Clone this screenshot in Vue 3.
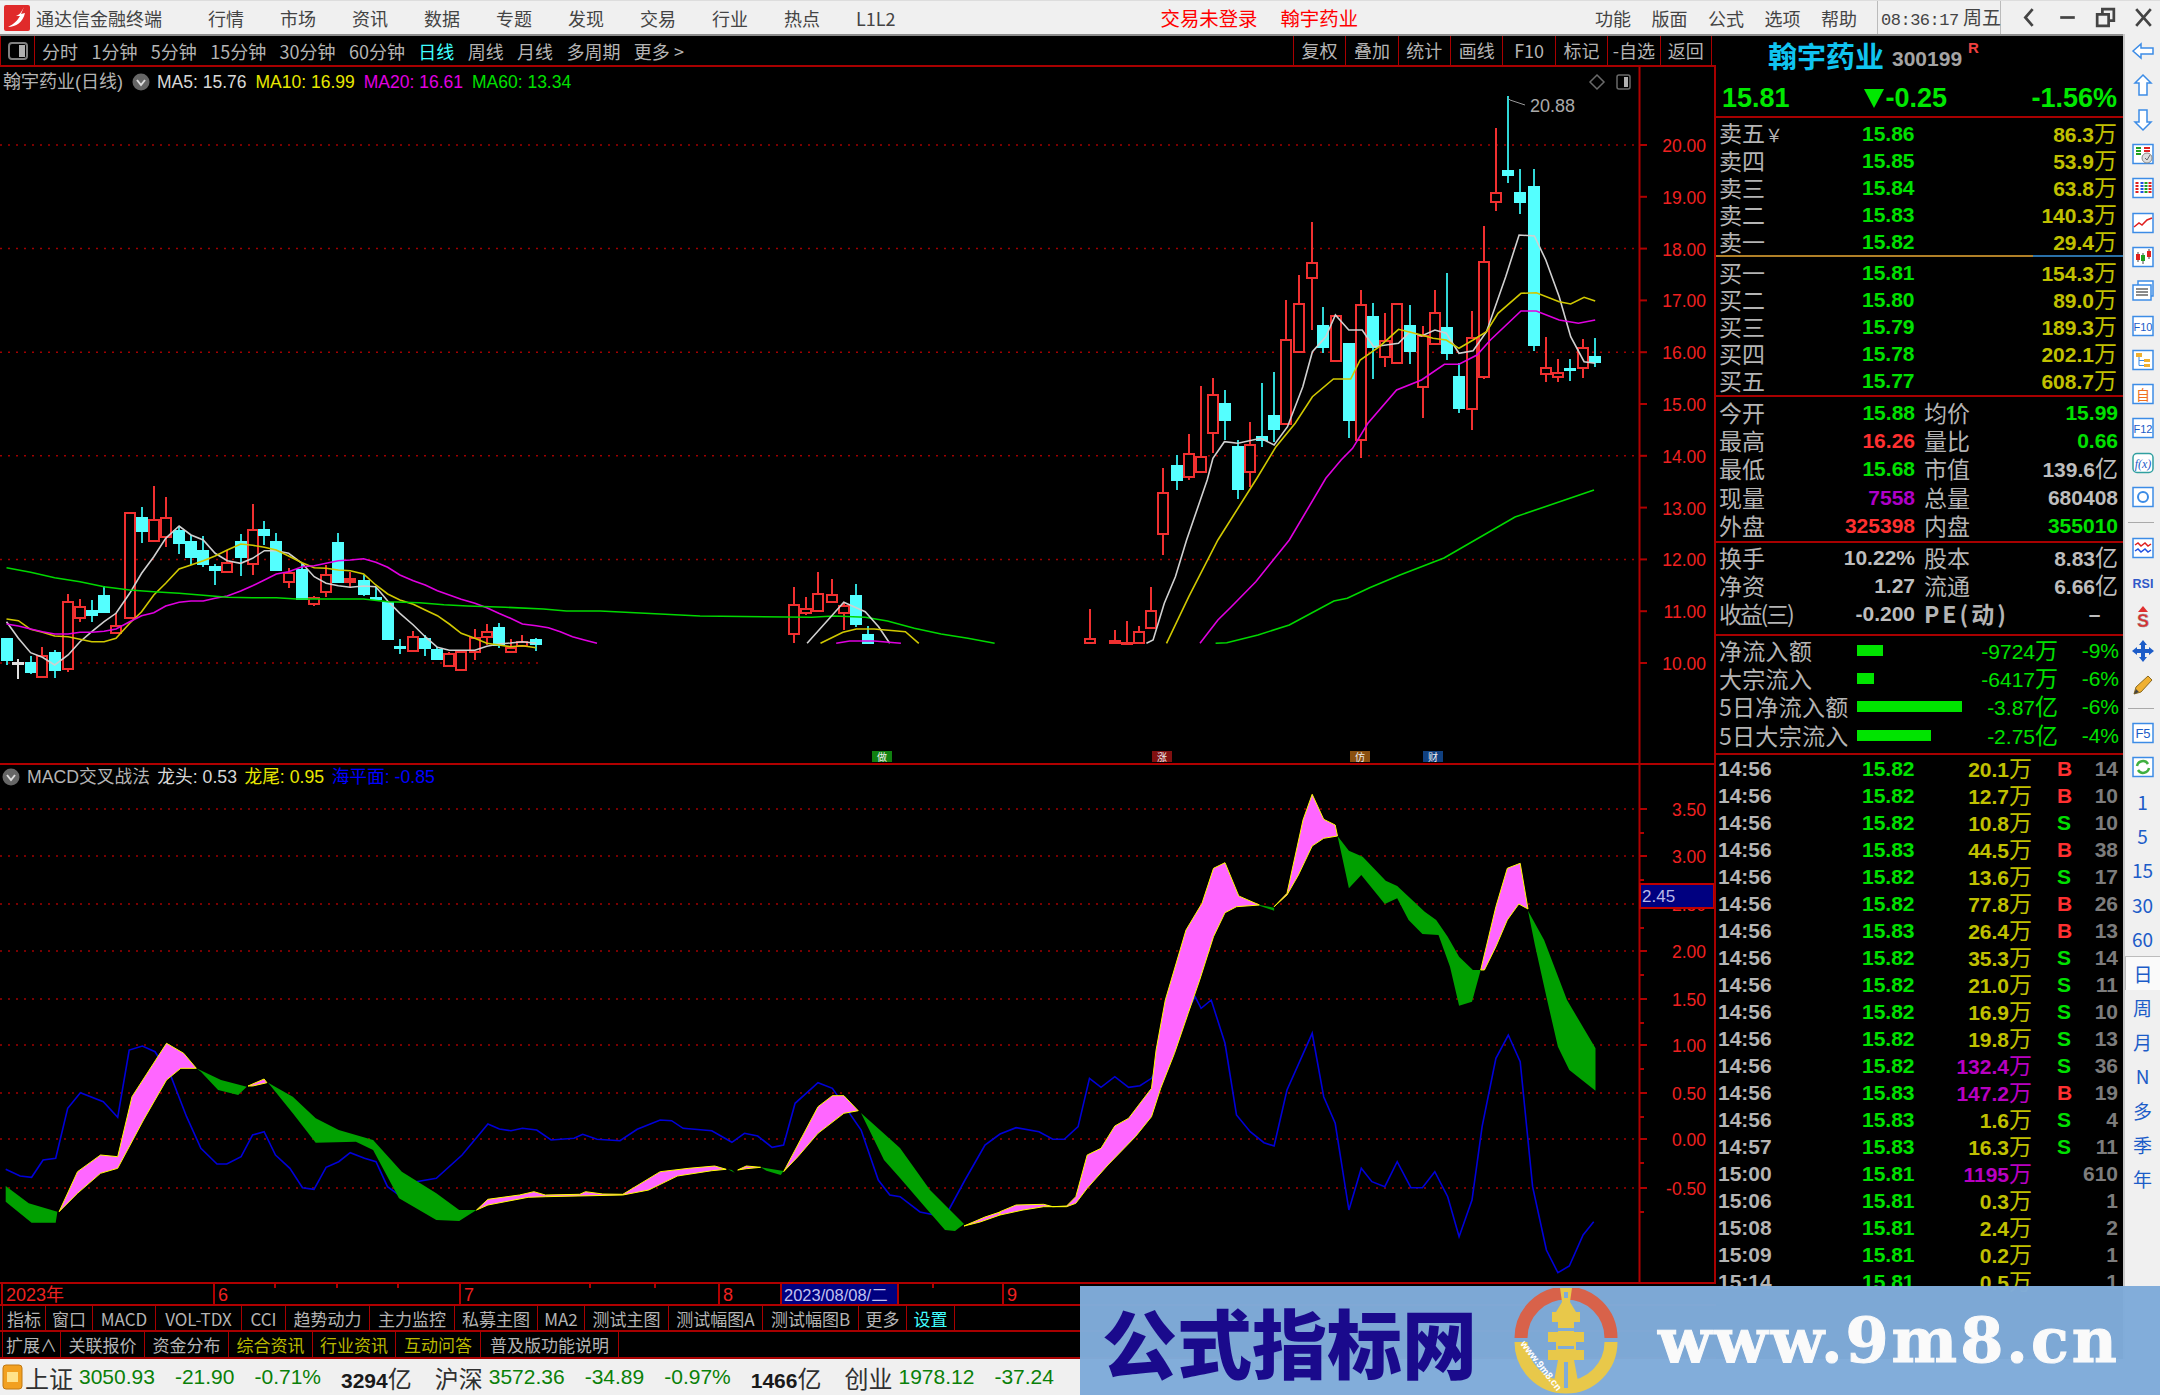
<template>
  <div class="app">
    <header class="titlebar">
      <svg class="logo" viewBox="0 0 26 26">
        <rect width="26" height="26" rx="2" fill="#e02a2a" />
        <path d="M20 2 C17 8 15 10 12 11 L16 11 C13 16 10 19 4 22 C12 22 19 17 21 8 L17 9 Z" fill="#fff" />
      </svg>
      <span class="app-name">通达信金融终端</span>
      <nav class="menu">
        <span v-for="m in mainMenu" :key="m">{{ m }}</span>
      </nav>
      <div class="notice">
        <span>交易未登录</span>
        <span>翰宇药业</span>
      </div>
      <nav class="menu menu-right">
        <span v-for="m in sideMenu" :key="m">{{ m }}</span>
      </nav>
      <div class="clock"><b>08:36:17</b> 周五</div>
      <div class="win-buttons">
        <svg viewBox="0 0 24 24"><path d="M15 4 L8 12 L15 20" /></svg>
        <svg viewBox="0 0 24 24"><path d="M5 12 H19" /></svg>
        <svg viewBox="0 0 24 24"><path d="M4 9 H15 V20 H4 Z M9 9 V4 H20 V15 H15" /></svg>
        <svg viewBox="0 0 24 24"><path d="M5 4 L19 20 M19 4 L5 20" /></svg>
      </div>
    </header>

    <div class="body">
      <main class="left">
        <div class="toolbar">
          <div class="pane-toggle">
            <svg viewBox="0 0 20 18" width="20" height="18">
              <rect x="1" y="1" width="18" height="16" rx="3" fill="none" stroke="#808080" stroke-width="2" />
              <rect x="11" y="3" width="6" height="12" fill="#b0b0b0" />
            </svg>
          </div>
          <span v-for="p in periods" :key="p" class="period" :class="{ active: p === '日线' }">{{ p }}</span>
          <div class="tools">
            <span v-for="t in tools" :key="t">{{ t }}</span>
          </div>
        </div>

        <section class="pane pane-main">
          <svg class="chart" viewBox="0 67 1716 698" width="1716" height="698">
            <line v-for="g in priceGrid" :key="g.y" x1="0" :x2="g.x2" :y1="g.y" :y2="g.y" class="grid" />
            <g v-for="(c, i) in candles" :key="i" :class="'candle-' + c.kind">
              <line :x1="c.x" :x2="c.x" :y1="c.high" :y2="c.low" class="wick" />
              <rect :x="c.x - 5" :y="c.top" width="10" :height="c.height" class="candle-body" />
            </g>
            <polyline v-for="(l, i) in maLines" :key="i" :points="l.points" :stroke="l.color" class="ma" />
            <polyline points="1508,98 1510,100 1525,105" class="flag" />
            <text x="1530" y="112" class="peak">20.88</text>
            <g v-for="m in markers" :key="m.label">
              <rect :x="m.x" y="751" width="20" height="11" :fill="m.color" />
              <text :x="m.x + 10" y="761" class="marker">{{ m.label }}</text>
            </g>
            <line x1="1639.5" x2="1639.5" y1="67" y2="765" class="axis-line" />
            <g v-for="a in priceAxis" :key="a.label">
              <line x1="1640" x2="1647" :y1="a.y" :y2="a.y" class="axis-line" />
              <text x="1706" :y="a.y + 7" class="axis-label">{{ a.label }}</text>
            </g>
            <path d="M1597 75 L1604 82 L1597 89 L1590 82 Z" class="diamond" />
            <rect x="1617" y="75" width="13" height="14" rx="2" class="diamond" />
            <rect x="1624" y="77" width="4" height="10" fill="#b0b0b0" />
          </svg>
          <div class="legend">
            <span class="legend-name">翰宇药业(日线)</span>
            <svg class="chevron" viewBox="0 0 18 18"><circle cx="9" cy="9" r="8.5" fill="#666" /><path d="M5 7 L9 12 L13 7" fill="none" stroke="#ddd" stroke-width="2" /></svg>
            <span class="c-white">MA5: 15.76</span>
            <span class="c-yellow">MA10: 16.99</span>
            <span class="c-magenta">MA20: 16.61</span>
            <span class="c-green">MA60: 13.34</span>
          </div>
        </section>

        <section class="pane pane-sub">
          <svg class="chart" viewBox="0 765 1716 517" width="1716" height="517">
            <line v-for="a in macdAxis" :key="a.y" x1="0" x2="1640" :y1="a.y" :y2="a.y" class="grid" />
            <polyline :points="seaLine" class="sea" />
            <polygon v-for="(p, i) in bandsUp" :key="'u' + i" :points="p" class="band-up" />
            <polygon v-for="(p, i) in bandsDown" :key="'d' + i" :points="p" class="band-down" />
            <line x1="1639.5" x2="1639.5" y1="765" y2="1282" class="axis-line" />
            <g v-for="a in macdAxis" :key="a.label">
              <line x1="1640" x2="1647" :y1="a.y" :y2="a.y" class="axis-line" />
              <line x1="1640" x2="1644" :y1="a.y + 24" :y2="a.y + 24" class="axis-line" />
              <text x="1706" :y="a.y + 7" class="axis-label">{{ a.label }}</text>
            </g>
            <rect x="1640" y="884" width="74" height="24" class="price-tag" />
            <text x="1642" y="902" class="price-tag-text">2.45</text>
          </svg>
          <div class="legend legend-sub">
            <svg class="chevron" viewBox="0 0 18 18"><circle cx="9" cy="9" r="8.5" fill="#666" /><path d="M5 7 L9 12 L13 7" fill="none" stroke="#ddd" stroke-width="2" /></svg>
            <span class="legend-name">MACD交叉战法</span>
            <span class="c-white">龙头: 0.53</span>
            <span class="c-yellow">龙尾: 0.95</span>
            <span class="c-blue">海平面: -0.85</span>
          </div>
        </section>

        <svg class="date-axis" viewBox="0 1282 1716 24" width="1716" height="24">
          <rect x="781" y="1284" width="117" height="21" fill="#000080" />
          <line x1="0" x2="1716" y1="1283" y2="1283" class="axis-line" />
          <line x1="0" x2="1716" y1="1305" y2="1305" class="axis-line" />
          <line v-for="d in dateTicks" :key="d" :x1="d" :x2="d" y1="1283" y2="1288" class="axis-line" />
          <g v-for="d in dateMarks" :key="d.x">
            <line :x1="d.x" :x2="d.x" y1="1283" y2="1305" class="axis-line" />
            <text :x="d.x + 4" y="1301" class="date-label">{{ d.label }}</text>
          </g>
          <text x="784" y="1301" class="date-current">2023/08/08/二</text>
        </svg>

        <div class="tabs tabs-first">
          <span v-for="t in tabsFirst" :key="t.label" :class="t.color" :style="{ width: t.width + 'px' }">{{ t.label }}</span>
        </div>
        <div class="tabs tabs-second">
          <span v-for="t in tabsSecond" :key="t.label" :class="t.color" :style="{ width: t.width + 'px' }">{{ t.label }}</span>
        </div>
      </main>

      <aside class="panel">
        <div class="stock-name">
          <strong>翰宇药业</strong>
          <span class="stock-code">300199</span>
          <sup>R</sup>
        </div>
        <div class="quote">
          <span>15.81</span>
          <span class="quote-change"><i></i>-0.25</span>
          <span class="quote-pct">-1.56%</span>
        </div>

        <div class="book">
          <div v-for="r in asks" :key="r.label" class="book-row">
            <span class="lbl">{{ r.label }}<em v-if="r.yen" class="yen">￥</em></span>
            <span class="num c-green">{{ r.price }}</span>
            <span class="num qty">{{ r.qty }}<small>万</small></span>
          </div>
        </div>
        <div class="book-split"></div>
        <div class="book">
          <div v-for="r in bids" :key="r.label" class="book-row">
            <span class="lbl">{{ r.label }}</span>
            <span class="num c-green">{{ r.price }}</span>
            <span class="num qty">{{ r.qty }}<small>万</small></span>
          </div>
        </div>

        <div class="stats stats-first">
          <div v-for="r in statsFirst" :key="r[0]" class="stat-row">
            <span class="lbl stat-first">{{ r[0] }}</span>
            <span class="num stat-val" :class="r[2]">{{ r[1] }}</span>
            <span class="lbl stat-second">{{ r[3] }}</span>
            <span class="num stat-end" :class="r[5]">{{ r[4] }}<small v-if="r[6]">{{ r[6] }}</small></span>
          </div>
        </div>
        <div class="stats stats-second">
          <div v-for="r in statsSecond" :key="r[0]" class="stat-row">
            <span class="lbl stat-first" :class="{ 'lbl-tight': r[0].includes('(') }">{{ r[0] }}</span>
            <span class="num stat-val c-grey">{{ r[1] }}</span>
            <span class="lbl stat-second" :class="{ 'lbl-wide': r[3].startsWith('PE') }">{{ r[3] }}</span>
            <span class="num stat-end c-grey">{{ r[4] }}<small v-if="r[5]">{{ r[5] }}</small></span>
          </div>
        </div>
        <div class="flows">
          <div v-for="f in flows" :key="f.label" class="flow-row">
            <span class="lbl flow-label">{{ f.label }}</span>
            <span class="flow-bar" :style="{ width: f.bar + 'px' }"></span>
            <span class="num flow-val">{{ f.value }}<small>{{ f.unit }}</small></span>
            <span class="num flow-pct">{{ f.pct }}</span>
          </div>
        </div>
        <div class="ticks">
          <div v-for="(t, i) in ticks" :key="i" class="tick-row">
            <span class="num tick-time">{{ t[0] }}</span>
            <span class="num c-green">{{ t[1] }}</span>
            <span class="num tick-qty" :class="{ big: t[5] }">{{ t[2] }}<small>万</small></span>
            <span class="num tick-side" :class="t[3] === 'B' ? 'c-red' : 'c-green'">{{ t[3] }}</span>
            <span class="num tick-count">{{ t[4] }}</span>
          </div>
        </div>
      </aside>

      <aside class="sidebar">
        <template v-for="(s, i) in sideItems" :key="i">
          <div v-if="s === '-'" class="side-sep" :class="{ short: i > 15 }"></div>
          <div v-else-if="s.text" class="side-item side-text" :class="{ selected: s.text === '日' }">{{ s.text }}</div>
          <div v-else class="side-item">
            <svg viewBox="0 0 24 24" width="24" height="24" v-html="s.icon"></svg>
          </div>
        </template>
      </aside>
    </div>

    <footer class="status">
      <svg class="status-icon" viewBox="0 0 21 28">
        <rect x="1" y="2" width="19" height="24" rx="3" fill="#f2a020" stroke="#c07810" />
        <rect x="5" y="9" width="11" height="10" fill="#ffe28a" />
      </svg>
      <div v-for="x in indexes" :key="x.name" class="index">
        <span class="index-name">{{ x.name }}</span>
        <span class="index-num">{{ x.price }}</span>
        <span class="index-num">{{ x.change }}</span>
        <span v-if="x.pct" class="index-num">{{ x.pct }}</span>
        <span v-if="x.amount" class="index-amount"><b>{{ x.amount }}</b><small>亿</small></span>
      </div>
    </footer>

    <div class="banner">
      <span class="banner-title">公式指标网</span>
      <svg class="banner-logo" viewBox="0 0 104 106" width="104" height="106">
        <path d="M7 50 A45 45 0 0 1 97 50" fill="none" stroke="#d8624a" stroke-width="13" />
        <path d="M7 54 A45 45 0 0 0 97 54" fill="none" stroke="#e8c84a" stroke-width="13" />
        <path d="M46 0 H58 L56 14 L62 24 H66 V34 H60 V44 H70 V54 H62 V62 H70 V72 H60 L66 104 H38 L44 72 H34 V62 H42 V54 H34 V44 H44 V34 H38 V24 H42 L48 14 Z" fill="#e8c84a" />
        <path d="M50 4 H54 V10 H50 Z M44 40 H60 V43 H44 Z M44 58 H60 V61 H44 Z M50 74 H54 V100 H50 Z" fill="#7fabd9" />
        <text x="6" y="56" class="banner-logo-text" transform="rotate(52 6 56)">www.9m8.cn</text>
      </svg>
      <span class="banner-url">www.9m8.cn</span>
    </div>
  </div>
</template>

<script setup>
// positions below were read off enlarged crops of the chart, so each list keeps its crop's scale
const crop = (scaleX, originX, originY) => ({
  x: (v) => originX + v / scaleX,
  y: (v) => originY + v / 3
})
const cropLeft = crop(2.613, 0, 470)
const cropMiddle = crop(2.24, 700, 540)
const cropRight = crop(2.613, 1100, 80)
const cropSubLeft = crop(1.742, 0, 760)
const cropSubRight = crop(2.178, 1000, 760)

const toPoints = (list, c) => list.map(([x, y]) => `${c.x(x).toFixed(1)},${c.y(y).toFixed(1)}`).join(' ')
const toCandles = (rows, c) =>
  rows.map(([x, high, top, bottom, low, kind]) => ({
    x: Math.round(c.x(x)),
    high: c.y(high),
    top: c.y(top),
    height: Math.max((bottom - top) / 3, 1),
    low: c.y(low),
    kind
  }))

const mainMenu = ['行情', '市场', '资讯', '数据', '专题', '发现', '交易', '行业', '热点', 'L1L2']
const sideMenu = ['功能', '版面', '公式', '选项', '帮助']
const periods = ['分时', '1分钟', '5分钟', '15分钟', '30分钟', '60分钟', '日线', '周线', '月线', '多周期', '更多 >']
const tools = ['复权', '叠加', '统计', '画线', 'F10', '标记', '-自选', '返回']

const candles = [
  ...toCandles([
    [17, 508, 508, 570, 585, 'c'], [48, 567, 580, 582, 628, 'w'], [80, 558, 580, 607, 612, 'c'],
    [111, 530, 558, 620, 623, 'r'], [143, 540, 548, 601, 625, 'c'], [178, 373, 397, 597, 607, 'r'],
    [209, 386, 410, 443, 455, 'r'], [240, 390, 422, 436, 455, 'c'], [272, 347, 377, 427, 427, 'c'],
    [303, 430, 469, 489, 490, 'r'], [339, 130, 130, 443, 443, 'r'], [370, 111, 143, 183, 220, 'c'],
    [402, 48, 149, 214, 214, 'r'], [433, 80, 144, 200, 232, 'r'], [468, 170, 183, 220, 252, 'c'],
    [499, 195, 215, 260, 285, 'c'], [531, 197, 242, 283, 291, 'c'], [562, 283, 292, 300, 346, 'c'],
    [594, 240, 279, 305, 310, 'r'], [629, 193, 215, 260, 318, 'c'], [660, 102, 180, 282, 314, 'r'],
    [691, 152, 179, 196, 224, 'c'], [722, 188, 215, 300, 300, 'c'], [754, 295, 310, 336, 355, 'r'],
    [789, 283, 301, 388, 388, 'c'], [821, 378, 383, 403, 408, 'r'], [852, 285, 316, 367, 381, 'r'],
    [884, 188, 220, 337, 340, 'c'], [915, 305, 328, 336, 350, 's'], [950, 316, 333, 373, 378, 'c'],
    [982, 350, 384, 387, 393, 'c'], [1013, 395, 400, 507, 507, 'c'], [1045, 508, 530, 534, 553, 'c'],
    [1080, 482, 500, 542, 545, 'r'], [1111, 495, 508, 533, 557, 'c'], [1143, 530, 540, 566, 566, 'c'],
    [1174, 545, 552, 588, 592, 'r'], [1205, 546, 546, 601, 601, 'r'], [1241, 477, 505, 547, 571, 'r'],
    [1272, 463, 487, 502, 525, 'r'], [1303, 458, 473, 525, 535, 'c'], [1334, 508, 533, 547, 548, 'r'],
    [1365, 494, 516, 527, 527, 'r'], [1401, 503, 509, 523, 543, 'c']
  ], cropLeft),
  ...toCandles([
    [211, 140, 195, 283, 310, 'r'], [238, 172, 208, 220, 225, 'r'], [265, 95, 163, 212, 215, 'r'],
    [295, 118, 164, 185, 190, 'r'], [322, 190, 198, 220, 270, 'r'], [349, 131, 167, 252, 262, 'c'],
    [376, 258, 284, 310, 310, 'c'], [873, 208, 298, 310, 310, 'r'], [930, 270, 303, 310, 310, 'r'],
    [957, 244, 309, 310, 310, 'r'], [984, 258, 277, 310, 310, 'r'], [1011, 140, 213, 265, 268, 'r'],
    [1037, -216, -141, -18, 45, 'r']
  ], cropMiddle),
  ...toCandles([
    [200, 1124, 1157, 1200, 1230, 'c'], [232, 1062, 1122, 1190, 1200, 'r'], [263, 918, 1130, 1177, 1177, 'r'],
    [295, 895, 945, 1058, 1120, 'r'], [326, 930, 972, 1020, 1080, 'c'], [361, 1080, 1102, 1227, 1256, 'c'],
    [392, 1025, 1095, 1175, 1220, 'r'], [424, 908, 1070, 1080, 1100, 'c'], [455, 877, 1008, 1047, 1085, 'c'],
    [487, 660, 780, 1033, 1035, 'r'], [521, 585, 672, 816, 816, 'r'], [553, 427, 550, 595, 750, 'r'],
    [584, 680, 738, 800, 818, 'c'], [616, 707, 707, 843, 843, 'r'], [651, 792, 792, 1020, 1075, 'c'],
    [683, 630, 676, 1080, 1135, 'r'], [714, 670, 710, 800, 898, 'c'], [745, 700, 783, 830, 862, 'r'],
    [777, 672, 672, 848, 848, 'r'], [811, 675, 738, 812, 853, 'c'], [843, 738, 768, 920, 1015, 'r'],
    [875, 630, 698, 793, 793, 'r'], [906, 580, 743, 820, 840, 'c'], [938, 850, 890, 983, 998, 'c'],
    [972, 692, 775, 987, 1050, 'r'], [1004, 437, 545, 892, 897, 'r'], [1035, 143, 338, 366, 393, 'r'],
    [1067, 48, 273, 286, 310, 'c'], [1098, 268, 340, 367, 403, 'c'], [1134, 268, 320, 795, 812, 'c'],
    [1165, 770, 865, 883, 907, 'r'], [1196, 836, 878, 892, 907, 'r'], [1228, 836, 868, 871, 903, 'c'],
    [1263, 778, 805, 865, 893, 'r'], [1294, 773, 832, 845, 862, 'c']
  ], cropRight)
]

const maLines = [
  { color: '#d0d0d0', points: toPoints([[17, 455], [48, 505], [80, 548], [111, 562], [143, 585], [178, 555], [209, 515], [240, 485], [272, 455], [303, 430], [339, 370], [370, 310], [402, 260], [433, 205], [468, 168], [499, 195], [531, 210], [562, 250], [594, 272], [629, 280], [660, 265], [691, 242], [722, 242], [754, 250], [789, 280], [821, 320], [852, 340], [884, 347], [915, 352], [950, 348], [982, 350], [1013, 393], [1045, 430], [1080, 465], [1111, 500], [1143, 532], [1174, 541], [1205, 541], [1241, 541], [1272, 529], [1303, 522], [1334, 519], [1365, 515], [1401, 520]], cropLeft) },
  { color: '#d0c800', points: toPoints([[17, 447], [48, 452], [80, 478], [111, 487], [143, 498], [178, 500], [209, 508], [240, 515], [272, 515], [303, 505], [339, 460], [370, 425], [402, 375], [433, 340], [468, 297], [499, 285], [531, 272], [562, 258], [594, 240], [629, 222], [660, 226], [691, 232], [722, 240], [754, 258], [789, 278], [821, 293], [852, 295], [884, 300], [915, 302], [950, 312], [982, 345], [1013, 372], [1045, 390], [1080, 403], [1111, 420], [1143, 437], [1174, 462], [1205, 490], [1241, 505], [1272, 520], [1303, 525], [1334, 530], [1365, 527], [1401, 533]], cropLeft) },
  { color: '#e000e0', points: toPoints([[17, 462], [48, 468], [80, 477], [111, 485], [143, 492], [178, 492], [209, 487], [240, 487], [272, 484], [303, 477], [339, 455], [370, 437], [402, 428], [433, 408], [468, 397], [499, 393], [531, 393], [562, 385], [594, 378], [629, 363], [660, 347], [691, 330], [722, 312], [754, 305], [789, 290], [821, 287], [852, 280], [884, 272], [915, 270], [950, 266], [982, 277], [1013, 292], [1045, 315], [1080, 332], [1111, 345], [1143, 362], [1174, 375], [1205, 388], [1241, 400], [1272, 413], [1303, 430], [1334, 445], [1365, 462], [1401, 467], [1433, 473], [1464, 485], [1496, 500], [1527, 510], [1560, 520]], cropLeft) },
  { color: '#00d800', points: toPoints([[17, 293], [80, 307], [143, 323], [209, 335], [272, 350], [339, 360], [402, 365], [468, 370], [531, 376], [594, 382], [660, 383], [722, 383], [775, 387], [852, 387], [950, 387], [1013, 395], [1096, 398], [1160, 404], [1222, 408], [1320, 412], [1420, 417], [1480, 423], [1568, 423]], cropLeft) + ' ' + toPoints([[0, 228], [250, 232], [300, 228], [370, 232], [420, 243], [480, 265], [540, 282], [600, 295], [660, 310]], cropMiddle) },
  { color: '#00d800', points: toPoints([[1155, 310], [1180, 308], [1250, 285], [1320, 255], [1420, 183], [1450, 175], [1500, 143], [1568, 105]], cropMiddle) + ' 1444,558 1515,517 1594,490' },
  { color: '#d0d0d0', points: toPoints([[240, 310], [290, 235], [322, 187], [370, 215], [400, 260], [425, 310]], cropMiddle) },
  { color: '#d0c800', points: toPoints([[270, 310], [320, 277], [350, 267], [390, 267], [460, 275], [490, 310]], cropMiddle) },
  { color: '#e000e0', points: toPoints([[305, 310], [335, 303], [390, 303], [450, 310]], cropMiddle) },
  { color: '#d0d0d0', points: toPoints([[1000, 310], [1015, 300], [1040, 190], [1065, 110], [1090, 0]], cropMiddle) + ' ' + toPoints([[280, 1200], [295, 1135], [325, 1085], [360, 1090], [420, 1075], [455, 1095], [490, 1040], [530, 920], [555, 815], [590, 770], [615, 705], [650, 750], [685, 750], [715, 800], [780, 790], [810, 755], [840, 768], [875, 750], [905, 760], [938, 820], [975, 812], [1010, 755], [1060, 590], [1095, 465], [1135, 468], [1165, 540], [1200, 650], [1230, 770], [1265, 845], [1294, 850]], cropRight) },
  { color: '#d0c800', points: toPoints([[1045, 310], [1095, 170], [1160, 0]], cropMiddle) + ' ' + toPoints([[410, 1195], [460, 1100], [510, 1030], [555, 950], [610, 897], [655, 897], [680, 840], [730, 800], [780, 748], [840, 765], [870, 775], [905, 780], [938, 805], [975, 780], [1010, 755], [1040, 700], [1100, 640], [1140, 638], [1200, 665], [1230, 672], [1265, 652], [1294, 663]], cropRight) },
  { color: '#e000e0', points: toPoints([[1120, 310], [1160, 240], [1190, 200], [1245, 125], [1320, 0]], cropMiddle) + ' ' + toPoints([[590, 1195], [630, 1140], [660, 1105], [700, 1030], [775, 930], [840, 900], [900, 853], [938, 853], [985, 825], [1020, 780], [1100, 693], [1140, 693], [1200, 720], [1250, 730], [1294, 720]], cropRight) }
]

const priceY = (p) => 145 + (20 - p) * 51.8
const priceAxis = [20, 19, 18, 17, 16, 15, 14, 13, 12, 11, 10].map((p) => ({ y: priceY(p), label: p.toFixed(2) }))
const priceGrid = [20, 18, 16, 14, 12, 10].map((p) => ({ y: priceY(p), x2: p === 10 ? 538 : 1640 }))

const markers = [
  { x: 872, label: '做', color: '#108010' },
  { x: 1152, label: '涨', color: '#801010' },
  { x: 1350, label: '仿', color: '#8a5010' },
  { x: 1423, label: '财', color: '#104080' }
]

const macdAxis = [
  ['3.50', 809], ['3.00', 856], ['2.50', 904], ['2.00', 951], ['1.50', 999],
  ['1.00', 1045], ['0.50', 1093], ['0.00', 1139], ['-0.50', 1188]
].map(([label, y]) => ({ label, y }))

const seaLine = [
  toPoints([[10, 1228], [35, 1248], [55, 1252], [75, 1200], [97, 1195], [118, 1045], [140, 998], [180, 1025], [205, 1072], [225, 870], [248, 858], [270, 875], [298, 950], [325, 1070], [350, 1165], [378, 1212], [395, 1212], [420, 1190], [440, 1125], [460, 1115], [480, 1185], [505, 1225], [527, 1283], [547, 1288], [568, 1222], [590, 1205], [610, 1178], [635, 1195], [655, 1205], [675, 1280], [695, 1305], [725, 1265], [760, 1255], [805, 1185], [850, 1092], [870, 1107], [890, 1112], [910, 1105], [935, 1110], [960, 1140], [1000, 1135], [1015, 1123], [1040, 1138], [1080, 1142], [1110, 1108], [1150, 1080], [1170, 1082], [1190, 1105], [1240, 1112], [1275, 1147], [1297, 1120], [1320, 1128], [1345, 1162], [1365, 1155], [1385, 1030], [1425, 968], [1450, 985], [1500, 1110], [1530, 1260], [1550, 1305], [1568, 1310]], cropSubLeft),
  '920,1212 945,1217 965,1180 985,1145',
  toPoints([[0, 1122], [35, 1103], [85, 1115], [115, 1138], [140, 1138], [170, 1100], [195, 955], [220, 982], [250, 950], [280, 982], [305, 977], [330, 955], [425, 710], [438, 745], [460, 720], [490, 850], [515, 1065], [545, 1115], [575, 1148], [597, 1158], [625, 990], [680, 820], [705, 1010], [730, 1090], [760, 1350], [787, 1225], [810, 1265], [838, 1280], [865, 1205], [895, 1283], [920, 1283], [947, 1235], [975, 1310], [1000, 1430], [1028, 1320], [1050, 1100], [1080, 895], [1107, 825], [1133, 905], [1160, 1280], [1190, 1470], [1215, 1538], [1240, 1518], [1270, 1425], [1293, 1385]], cropSubRight)
].join(' ')

const bandsUp = [
  toPoints([[103, 1355], [135, 1235], [175, 1185], [205, 1190], [230, 1010], [290, 850], [320, 880], [342, 925], [315, 925], [290, 960], [250, 1080], [205, 1225], [175, 1240], [135, 1300]], cropSubLeft),
  toPoints([[432, 978], [460, 957], [465, 968], [440, 978]], cropSubLeft),
  toPoints([[830, 1350], [850, 1318], [905, 1305], [930, 1295], [950, 1305], [1010, 1303], [1020, 1295], [1050, 1302], [1085, 1303], [1150, 1235], [1200, 1225], [1245, 1218], [1265, 1228], [1240, 1232], [1180, 1248], [1130, 1290], [1085, 1305], [950, 1310], [920, 1312], [850, 1335]], cropSubLeft),
  toPoints([[1285, 1230], [1300, 1218], [1325, 1222], [1300, 1226]], cropSubLeft),
  toPoints([[1365, 1235], [1425, 1040], [1450, 1007], [1470, 1007], [1495, 1052], [1470, 1060], [1425, 1120], [1390, 1190]], cropSubLeft),
  '964,1226 985,1217 1000,1212 1000,1215 980,1222',
  toPoints([[0, 1355], [35, 1335], [95, 1333], [115, 1340], [145, 1338], [165, 1310], [190, 1185], [220, 1165], [250, 1098], [280, 1075], [330, 985], [340, 870], [360, 720], [405, 510], [440, 430], [465, 325], [490, 308], [520, 408], [565, 435], [515, 440], [490, 458], [465, 530], [435, 660], [410, 760], [380, 880], [350, 985], [330, 1070], [295, 1130], [235, 1215], [190, 1285], [165, 1330], [145, 1340], [95, 1340], [50, 1350], [0, 1365]], cropSubRight),
  toPoints([[597, 440], [625, 400], [660, 180], [680, 103], [705, 178], [730, 195], [735, 228], [705, 235], [680, 258], [650, 345], [625, 405]], cropSubRight),
  toPoints([[1047, 630], [1080, 440], [1105, 325], [1133, 310], [1150, 447], [1130, 432], [1105, 480], [1080, 560], [1055, 630]], cropSubRight)
]

const bandsDown = [
  toPoints([[10, 1278], [50, 1330], [100, 1355], [97, 1388], [55, 1388], [10, 1325]], cropSubLeft),
  toPoints([[342, 925], [385, 960], [430, 980], [415, 1005], [380, 990], [350, 935]], cropSubLeft),
  toPoints([[467, 968], [510, 1010], [550, 1075], [590, 1110], [650, 1140], [700, 1235], [760, 1300], [800, 1350], [830, 1350], [800, 1383], [760, 1380], [695, 1315], [650, 1170], [620, 1145], [550, 1148], [510, 1060]], cropSubLeft),
  toPoints([[1268, 1228], [1280, 1238], [1275, 1230]], cropSubLeft),
  toPoints([[1325, 1222], [1365, 1233], [1360, 1245], [1335, 1232]], cropSubLeft),
  '861,1113 900,1148 930,1190 964,1224 955,1231 945,1230 925,1207 900,1178 884,1160',
  toPoints([[565, 435], [597, 443], [597, 452], [565, 437]], cropSubRight),
  toPoints([[735, 228], [760, 272], [790, 290], [840, 362], [865, 378], [925, 455], [950, 480], [975, 530], [1000, 590], [1030, 630], [1047, 630], [1028, 725], [1000, 737], [980, 620], [955, 525], [920, 522], [890, 480], [865, 415], [838, 432], [787, 345], [760, 385], [745, 290]], cropSubRight),
  toPoints([[1150, 452], [1185, 540], [1235, 720], [1297, 865], [1297, 992], [1240, 930], [1215, 860], [1190, 710], [1165, 555]], cropSubRight)
]

const dateTicks = [275, 337, 398, 590, 655, 933]
const dateMarks = [
  { x: 2, label: '2023年' }, { x: 214, label: '6' }, { x: 460, label: '7' },
  { x: 719, label: '8' }, { x: 781, label: '' }, { x: 898, label: '' }, { x: 1003, label: '9' }
]

const tabsFirst = [
  { label: '指标', width: 44 }, { label: '窗口', width: 47 }, { label: 'MACD', width: 63 },
  { label: 'VOL-TDX', width: 86 }, { label: 'CCI', width: 44 }, { label: '趋势动力', width: 84 },
  { label: '主力监控', width: 85 }, { label: '私募主图', width: 83 }, { label: 'MA2', width: 47 },
  { label: '测试主图', width: 84 }, { label: '测试幅图A', width: 94 }, { label: '测试幅图B', width: 96 },
  { label: '更多', width: 48 }, { label: '设置', width: 48, color: 'c-cyan' }
]
const tabsSecond = [
  { label: '扩展∧', width: 59 }, { label: '关联报价', width: 84 }, { label: '资金分布', width: 84 },
  { label: '综合资讯', width: 84, color: 'c-olive' }, { label: '行业资讯', width: 83, color: 'c-olive' },
  { label: '互动问答', width: 85, color: 'c-olive' }, { label: '普及版功能说明', width: 138 }
]

const asks = [
  { label: '卖五', price: '15.86', qty: '86.3', yen: true },
  { label: '卖四', price: '15.85', qty: '53.9' },
  { label: '卖三', price: '15.84', qty: '63.8' },
  { label: '卖二', price: '15.83', qty: '140.3' },
  { label: '卖一', price: '15.82', qty: '29.4' }
]
const bids = [
  { label: '买一', price: '15.81', qty: '154.3' },
  { label: '买二', price: '15.80', qty: '89.0' },
  { label: '买三', price: '15.79', qty: '189.3' },
  { label: '买四', price: '15.78', qty: '202.1' },
  { label: '买五', price: '15.77', qty: '608.7' }
]
const statsFirst = [
  ['今开', '15.88', 'c-green', '均价', '15.99', 'c-green'],
  ['最高', '16.26', 'c-red', '量比', '0.66', 'c-green'],
  ['最低', '15.68', 'c-green', '市值', '139.6', 'c-grey', '亿'],
  ['现量', '7558', 'c-purple', '总量', '680408', 'c-grey'],
  ['外盘', '325398', 'c-red', '内盘', '355010', 'c-green']
]
const statsSecond = [
  ['换手', '10.22%', '', '股本', '8.83', '亿'],
  ['净资', '1.27', '', '流通', '6.66', '亿'],
  ['收益(三)', '-0.200', '', 'PE(动)', '–\u00a0\u00a0\u00a0', '']
]
const flows = [
  { label: '净流入额', bar: 26, value: '-9724', unit: '万', pct: '-9%' },
  { label: '大宗流入', bar: 17, value: '-6417', unit: '万', pct: '-6%' },
  { label: '5日净流入额', bar: 105, value: '-3.87', unit: '亿', pct: '-6%' },
  { label: '5日大宗流入', bar: 74, value: '-2.75', unit: '亿', pct: '-4%' }
]
const ticks = [
  ['14:56', '15.82', '20.1', 'B', '14'], ['14:56', '15.82', '12.7', 'B', '10'], ['14:56', '15.82', '10.8', 'S', '10'],
  ['14:56', '15.83', '44.5', 'B', '38'], ['14:56', '15.82', '13.6', 'S', '17'], ['14:56', '15.82', '77.8', 'B', '26'],
  ['14:56', '15.83', '26.4', 'B', '13'], ['14:56', '15.82', '35.3', 'S', '14'], ['14:56', '15.82', '21.0', 'S', '11'],
  ['14:56', '15.82', '16.9', 'S', '10'], ['14:56', '15.82', '19.8', 'S', '13'], ['14:56', '15.82', '132.4', 'S', '36', true],
  ['14:56', '15.83', '147.2', 'B', '19', true], ['14:56', '15.83', '1.6', 'S', '4'], ['14:57', '15.83', '16.3', 'S', '11'],
  ['15:00', '15.81', '1195', '', '610', true], ['15:06', '15.81', '0.3', '', '1'], ['15:08', '15.81', '2.4', '', '2'],
  ['15:09', '15.81', '0.2', '', '1'], ['15:14', '15.81', '0.5', '', '1']
]

const indexes = [
  { name: '上证', price: '3050.93', change: '-21.90', pct: '-0.71%', amount: '3294' },
  { name: '沪深', price: '3572.36', change: '-34.89', pct: '-0.97%', amount: '1466' },
  { name: '创业', price: '1978.12', change: '-37.24' }
]

const blue = '#3c8ce6'
const frame = `<rect x="2" y="2.5" width="20" height="19" fill="#fff" stroke="${blue}" stroke-width="1.5"/>`
const sideItems = [
  { icon: `<path d="M2 12 L10 5 V9 H22 V15 H10 V19 Z" fill="#fff" stroke="${blue}" stroke-width="1.5"/>` },
  { icon: `<path d="M12 2 L20 10 H16 V22 H8 V10 H4 Z" fill="#fff" stroke="${blue}" stroke-width="1.5"/>` },
  { icon: `<path d="M12 22 L20 14 H16 V2 H8 V14 H4 Z" fill="#fff" stroke="${blue}" stroke-width="1.5"/>` },
  { icon: `${frame}<path d="M5 6 H10 M5 9 H10 M5 12 H10" stroke="#20a020" stroke-width="2"/><path d="M13 6 H19 M13 9 H19" stroke="#e02020" stroke-width="2"/><circle cx="16" cy="16" r="5" fill="#ddd" stroke="#888"/><path d="M14 16 L16 18 L19 13" fill="none" stroke="#666"/>` },
  { icon: `${frame}<path d="M6 6 V18" stroke="#e02020" stroke-width="3" stroke-dasharray="2 1"/><path d="M11 6 V18" stroke="#2050e0" stroke-width="3" stroke-dasharray="2 1"/><path d="M15 6 V18" stroke="#20a020" stroke-width="3" stroke-dasharray="2 1"/><path d="M19 6 V18" stroke="#e02020" stroke-width="3" stroke-dasharray="2 1"/>` },
  { icon: `${frame}<path d="M3 16 L8 12 L11 14 L16 9 L21 7" fill="none" stroke="#e02020" stroke-width="1.5"/>` },
  { icon: `${frame}<path d="M7 7 V17 M12 8 V19 M18 4 V14" stroke="#444"/><rect x="5" y="9" width="4" height="6" fill="#e02020"/><rect x="10" y="10" width="4" height="6" fill="#20a020"/><rect x="16" y="6" width="4" height="6" fill="#e02020"/>` },
  { icon: `<rect x="7" y="2" width="15" height="15" fill="#fff" stroke="${blue}" stroke-width="1.5"/><rect x="2" y="6" width="18" height="15" fill="#fff" stroke="${blue}" stroke-width="1.5"/><path d="M5 10 H17 M5 13 H17 M5 16 H17" stroke="#666" stroke-width="1.5"/>` },
  { icon: `${frame}<text x="12" y="16.5" text-anchor="middle" font-family="Liberation Sans, sans-serif" font-size="11" fill="#1c5cc8">F10</text>` },
  { icon: `${frame}<rect x="5" y="5" width="6" height="4" fill="#f0b030"/><rect x="13" y="11" width="6" height="3" fill="#f0b030"/><rect x="13" y="16" width="6" height="3" fill="#f0b030"/><path d="M8 9 V17.5 H13 M8 12.5 H13" fill="none" stroke="${blue}"/>` },
  { icon: `${frame}<text x="12" y="18" text-anchor="middle" font-family="Noto Sans CJK SC, sans-serif" font-size="14" fill="#f07020">自</text>` },
  { icon: `${frame}<text x="12" y="16.5" text-anchor="middle" font-family="Liberation Sans, sans-serif" font-size="11" fill="#1c5cc8">F12</text>` },
  { icon: `<rect x="2" y="2.5" width="20" height="19" rx="4" fill="#fff" stroke="#30a0a0" stroke-width="1.5"/><text x="12" y="16.5" text-anchor="middle" font-family="Liberation Serif, serif" font-style="italic" font-size="12" fill="#1c5cc8">f(x)</text>` },
  { icon: `${frame}<circle cx="12" cy="12" r="5" fill="none" stroke="${blue}" stroke-width="2"/>` },
  '-',
  { icon: `${frame}<path d="M4 9 L7 7 L10 10 L14 7 L17 10 L20 8" fill="none" stroke="#e02020" stroke-width="1.5"/><path d="M4 15 L7 13 L10 16 L14 13 L17 16 L20 14" fill="none" stroke="#2050e0" stroke-width="1.5"/>` },
  { icon: `<text x="12" y="17" text-anchor="middle" font-family="Liberation Sans, sans-serif" font-weight="700" font-size="12.5" fill="#3058c8">RSI</text>` },
  { icon: `<path d="M12 1 L17 7 H7 Z" fill="#e03030"/><text x="12" y="22" text-anchor="middle" font-family="Liberation Sans, sans-serif" font-weight="700" font-size="18" fill="#d83030" stroke="#999" stroke-width=".4">S</text>` },
  { icon: `<path d="M12 1 L16 6 H14 V10 H18 V8 L23 12 L18 16 V14 H14 V18 H16 L12 23 L8 18 H10 V14 H6 V16 L1 12 L6 8 V10 H10 V6 H8 Z" fill="#1c5cc8"/>` },
  { icon: `<path d="M3 21 L5 14 L17 3 L21 7 L10 19 Z" fill="#f0b030" stroke="#8a6a20"/><path d="M3 21 L5 16 L8 19 Z" fill="#444"/>` },
  '-',
  { icon: `${frame}<text x="12" y="17" text-anchor="middle" font-family="Liberation Sans, sans-serif" font-size="13" fill="#1c5cc8">F5</text>` },
  { icon: `${frame}<path d="M6 11 A6 6 0 0 1 17 9 M18 13 A6 6 0 0 1 7 15" fill="none" stroke="#40b040" stroke-width="2.5"/>` },
  ...['1', '5', '15', '30', '60', '日', '周', '月', 'N', '多', '季', '年'].map((text) => ({ text }))
]
</script>

<style scoped>
.app {
  position: relative;
  width: 2160px;
  height: 1395px;
  display: flex;
  flex-direction: column;
  overflow: hidden;
  background: #000;
  font-family: "Noto Sans CJK SC", "Liberation Sans", sans-serif;
}

.titlebar {
  height: 36px;
  box-sizing: border-box;
  display: flex;
  align-items: center;
  background: #f0f0f0;
  border-top: 1px solid #ddd;
  border-bottom: 2px solid #8c8c8c;
  color: #444;
  font-size: 18px;
  white-space: nowrap;
}

.logo {
  width: 26px;
  height: 26px;
  margin-left: 4px;
  flex: none;
}

.app-name {
  margin-left: 6px;
  width: 126px;
}

.menu {
  display: flex;
  gap: 36px;
  margin-left: 46px;
}

.menu-right {
  gap: 20.5px;
  margin-left: 0;
}

.notice {
  display: flex;
  gap: 23px;
  margin-left: 265px;
  width: 434.5px;
  color: #f00;
  font-size: 19.4px;
}

.clock {
  width: 124px;
  height: 33px;
  margin-left: 20px;
  line-height: 31px;
  box-sizing: border-box;
  padding-left: 3px;
  border-left: 1px solid #bbb;
  border-right: 1px solid #bbb;
  font-size: 19px;
}

.clock b {
  font: 400 17px "Liberation Mono", monospace;
  letter-spacing: -0.5px;
}

.win-buttons {
  display: flex;
  gap: 13px;
  margin-left: 16px;
}

.win-buttons svg {
  width: 25px;
  height: 25px;
  fill: none;
  stroke: #444;
  stroke-width: 2.6;
}

.body {
  flex: 1;
  min-height: 0;
  display: flex;
}

.left {
  width: 1716px;
  flex: none;
  display: flex;
  flex-direction: column;
}

.toolbar {
  height: 31px;
  box-sizing: border-box;
  display: flex;
  align-items: center;
  border-bottom: 2px solid #a80000;
  color: #b4b4b4;
  font-size: 18px;
  white-space: nowrap;
}

.pane-toggle {
  width: 35px;
  height: 29px;
  box-sizing: border-box;
  display: flex;
  align-items: center;
  justify-content: center;
  border-left: 1px solid #a80000;
  border-right: 1px solid #a80000;
  margin-right: 7px;
}

.period {
  margin-right: 13.4px;
}

.active {
  color: #40ffff;
}

.tools {
  display: flex;
  margin-left: auto;
  margin-right: 4px;
}

.tools span {
  width: 52.4px;
  height: 29px;
  line-height: 28px;
  text-align: center;
  border-left: 1px solid #a80000;
  box-sizing: border-box;
}

.tools span:last-child {
  border-right: 1px solid #a80000;
}

.pane {
  position: relative;
  width: 1716px;
  overflow: hidden;
  border-right: 0;
}

.pane-main {
  height: 698px;
}

.pane-sub {
  height: 517px;
}

.chart,
.date-axis {
  display: block;
  flex: none;
}

.pane::after {
  content: "";
  position: absolute;
  top: 0;
  right: 0;
  bottom: 0;
  width: 2px;
  background: #a80000;
}

.pane-main::before {
  content: "";
  position: absolute;
  left: 0;
  right: 0;
  bottom: 0;
  height: 2px;
  background: #b00000;
}

.grid {
  stroke: #a00000;
  stroke-width: 1.5;
  stroke-dasharray: 2 6;
}

.axis-line {
  stroke: #b00000;
  stroke-width: 2;
}

.axis-label {
  fill: #f02020;
  font: 17.5px "Liberation Sans", sans-serif;
  text-anchor: end;
}

.wick {
  stroke-width: 2;
  shape-rendering: crispEdges;
}

.candle-body {
  stroke-width: 2;
  shape-rendering: crispEdges;
}

.candle-r .wick,
.candle-s .wick {
  stroke: #f03030;
}

.candle-r .candle-body {
  fill: #000;
  stroke: #f03030;
}

.candle-s .candle-body {
  fill: #f03030;
  stroke: #f03030;
}

.candle-c .wick {
  stroke: #30d8d8;
}

.candle-c .candle-body {
  fill: #54ffff;
  stroke: #54ffff;
}

.candle-w .wick,
.candle-w .candle-body {
  stroke: #e0e0e0;
  fill: #e0e0e0;
}

.ma {
  fill: none;
  stroke-width: 1.6;
}

.flag {
  fill: none;
  stroke: #999;
}

.peak {
  fill: #aaa;
  font: 18px "Liberation Sans", sans-serif;
}

.marker {
  fill: #eee;
  font-size: 10px;
  text-anchor: middle;
}

.diamond {
  fill: none;
  stroke: #6a6a6a;
  stroke-width: 1.5;
}

.sea {
  fill: none;
  stroke: #0000d8;
  stroke-width: 1.6;
}

.band-up {
  fill: #ff66ff;
  stroke: #ffff00;
  stroke-width: 1;
}

.band-down {
  fill: #00a000;
}

.price-tag {
  fill: #000080;
  stroke: #c00000;
  stroke-width: 2;
}

.price-tag-text {
  fill: #b8b8e8;
  font: 17px "Liberation Sans", sans-serif;
}

.legend {
  position: absolute;
  left: 3px;
  top: 4px;
  display: flex;
  align-items: center;
  font: 17.5px/22px "Liberation Sans", "Noto Sans CJK SC", sans-serif;
  white-space: nowrap;
}

.legend span {
  margin-right: 9px;
}

.legend-name {
  color: #b4b4b4;
  font-size: 18px;
}

.chevron {
  width: 18px;
  height: 18px;
  margin: 0 7px 0 0;
}

.legend-sub {
  top: 1px;
  left: 2px;
  font-size: 17.7px;
}

.legend-sub span {
  margin-right: 7.5px;
}

.legend-sub .legend-name {
  font-size: 17.7px;
}

.c-white {
  color: #d8d8d8;
}

.c-yellow {
  color: #e8e800;
}

.c-magenta {
  color: #e000e0;
}

.c-green {
  color: #00e000;
}

.c-blue {
  color: #0000ff;
}

.c-red {
  color: #ff3030;
}

.c-grey {
  color: #bdbdbd;
}

.c-purple {
  color: #b000c8;
}

.c-cyan {
  color: #40ffff;
}

.c-olive {
  color: #b8b800;
}

.date-label {
  fill: #f02020;
  font: 18px "Liberation Sans", "Noto Sans CJK SC", sans-serif;
}

.date-current {
  fill: #c0c0f0;
  font: 16.5px "Liberation Sans", "Noto Sans CJK SC", sans-serif;
}

.tabs {
  display: flex;
  box-sizing: border-box;
  padding-left: 2px;
  border-bottom: 2px solid #a80000;
  color: #b4b4b4;
  font-size: 17px;
  white-space: nowrap;
}

.tabs-first {
  height: 26px;
}

.tabs-second {
  height: 27px;
}

.tabs span {
  box-sizing: border-box;
  border-right: 1px solid #a80000;
  text-align: center;
  line-height: 26px;
  overflow: hidden;
}

.tabs span:first-child {
  border-left: 1px solid #a80000;
}

.panel {
  width: 407px;
  flex: none;
  display: flex;
  flex-direction: column;
  font-family: "Liberation Sans", "Noto Sans CJK SC", sans-serif;
  color: #bdbdbd;
}

.stock-name {
  height: 44px;
  flex: none;
  display: flex;
  align-items: center;
  padding: 0 0 7px 52px;
  box-sizing: border-box;
}

.stock-name strong {
  font: 700 29px/36px "Noto Sans CJK SC", sans-serif;
  color: #10c4f0;
}

.stock-code {
  margin: 8px 0 0 8px;
  font-size: 21px;
  font-weight: 700;
  color: #a4a4a4;
}

.stock-name sup {
  margin: -14px 0 0 6px;
  font-size: 15px;
  font-weight: 700;
  color: #f04040;
}

.quote {
  height: 38px;
  flex: none;
  box-sizing: border-box;
  display: flex;
  align-items: center;
  padding: 0 6px 0 6px;
  border-bottom: 2px solid #a80000;
  color: #00e800;
  font-size: 27px;
  font-weight: 700;
}

.quote-change {
  display: flex;
  align-items: center;
  margin-left: 74px;
}

.quote-change i {
  width: 0;
  height: 0;
  margin-right: 2px;
  border-style: solid;
  border-width: 19px 10px 0;
  border-color: #00e800 transparent transparent;
}

.quote-pct {
  margin-left: auto;
}

.book {
  flex: none;
  padding-top: 2px;
}

.book-row {
  height: 27px;
  display: flex;
  align-items: center;
  padding: 0 6px 0 3px;
}

.lbl {
  font: 23px/27px "Noto Sans CJK SC", sans-serif;
  color: #b4b4b4;
  white-space: nowrap;
}

.lbl-tight {
  letter-spacing: -2.2px;
}

.lbl-wide {
  font-weight: 700;
  letter-spacing: 3px;
}

.book-row .lbl {
  width: 143px;
}

.yen {
  font-style: normal;
  font-size: 18px;
}

.num {
  font: 700 21px/27px "Liberation Sans", sans-serif;
  white-space: nowrap;
}

.num small {
  font: 400 23px/27px "Noto Sans CJK SC", sans-serif;
}

.qty {
  margin-left: auto;
  color: #c0c000;
}

.book-split {
  height: 2px;
  margin-top: 0;
  background: linear-gradient(to right, #b08028 78%, #2a70a8 78%);
  flex: none;
}

.stats {
  box-sizing: border-box;
  border-top: 2px solid #a80000;
  flex: none;
}

.stats-first {
  margin-top: 1px;
  height: 146px;
  padding-top: 1px;
}

.stats-second {
  height: 93px;
  padding-top: 0;
}

.stat-row {
  height: 28.3px;
  display: flex;
  align-items: center;
  padding: 0 5px 0 3px;
}

.stat-first {
  width: 74px;
  flex: none;
}

.stat-val {
  width: 122px;
  flex: none;
  text-align: right;
}

.stat-second {
  margin-left: 9px;
}

.stat-end {
  margin-left: auto;
}

.flows {
  flex: none;
  box-sizing: border-box;
  height: 121px;
  padding-top: 0;
  border-top: 2px solid #a80000;
  border-bottom: 2px solid #a80000;
}

.flow-row {
  position: relative;
  height: 28.3px;
  display: flex;
  align-items: center;
  padding: 0 3px;
  color: #00e000;
}

.flow-label {
  width: 138px;
  flex: none;
  letter-spacing: 0.3px;
}

.flow-bar {
  height: 11px;
  background: #00e400;
}

.flow-val {
  position: absolute;
  right: 65px;
}

.flow-pct {
  position: absolute;
  right: 4px;
}

.flow-row .num {
  font-weight: 400;
}

.ticks {
  flex: none;
}

.tick-row {
  height: 27px;
  display: flex;
  align-items: center;
  padding-left: 2px;
  position: relative;
}

.tick-time {
  width: 144px;
  color: #b4b4b4;
}

.tick-qty {
  position: absolute;
  right: 91px;
  color: #c0c000;
}

.tick-qty.big {
  color: #b800c0;
}

.tick-side {
  position: absolute;
  left: 341px;
}

.tick-count {
  position: absolute;
  right: 5px;
  color: #7c7c7c;
}

.sidebar {
  flex: 1;
  box-sizing: border-box;
  margin-top: -2px;
  background: #f0f0f0;
  border-left: 2px solid #c8c8c8;
  overflow: hidden;
}

.side-item {
  height: 34.3px;
  display: flex;
  align-items: center;
  justify-content: center;
}

.side-item svg {
  overflow: visible;
}

.side-text {
  color: #1c5cc8;
  font-size: 19px;
}

.side-text.selected {
  box-sizing: border-box;
  background: #fafafa;
  border: 1px solid #bcbcbc;
  border-bottom: 0;
  border-right: 0;
}

.side-sep {
  height: 0;
  margin: 8px 6px 8px 3px;
  border-top: 1px solid #aaa;
}

.side-sep.short {
  margin: 5px 6px 7px 3px;
}

.status {
  height: 36px;
  display: flex;
  align-items: center;
  background: #f0f0f0;
  overflow: hidden;
  white-space: nowrap;
}

.status-icon {
  width: 21px;
  height: 28px;
  margin: 0 2px;
  flex: none;
}

.index {
  display: flex;
  align-items: center;
  margin-right: 23px;
  gap: 20px;
  flex: none;
}

.index-name {
  width: 48px;
  margin-right: -14px;
  color: #303030;
  font-size: 24px;
}

.index-num {
  color: #0a8008;
  font: 21px "Liberation Sans", sans-serif;
}

.index-amount {
  color: #1a1a1a;
  font: 21px "Liberation Sans", sans-serif;
}

.index-amount small {
  font: 24px "Noto Sans CJK SC", sans-serif;
  color: #303030;
}

.banner {
  position: absolute;
  right: 0;
  bottom: 0;
  width: 1080px;
  height: 109px;
  display: flex;
  align-items: center;
  background: rgba(127, 171, 217, 0.98);
}

.banner-title {
  margin-left: 22px;
  width: 372px;
  color: #1a0a8c;
  font: 900 75px/109px "Noto Sans CJK SC", sans-serif;
  white-space: nowrap;
}

.banner-logo {
  margin-left: 40px;
  flex: none;
}

.banner-logo-text {
  fill: #fff;
  font: 700 10px "Liberation Sans", sans-serif;
}

.banner-url {
  margin-left: 40px;
  color: #fafafa;
  font: 700 62px "DejaVu Serif", serif;
  letter-spacing: 3px;
  -webkit-text-stroke: 1px #fafafa;
  white-space: nowrap;
}
</style>
